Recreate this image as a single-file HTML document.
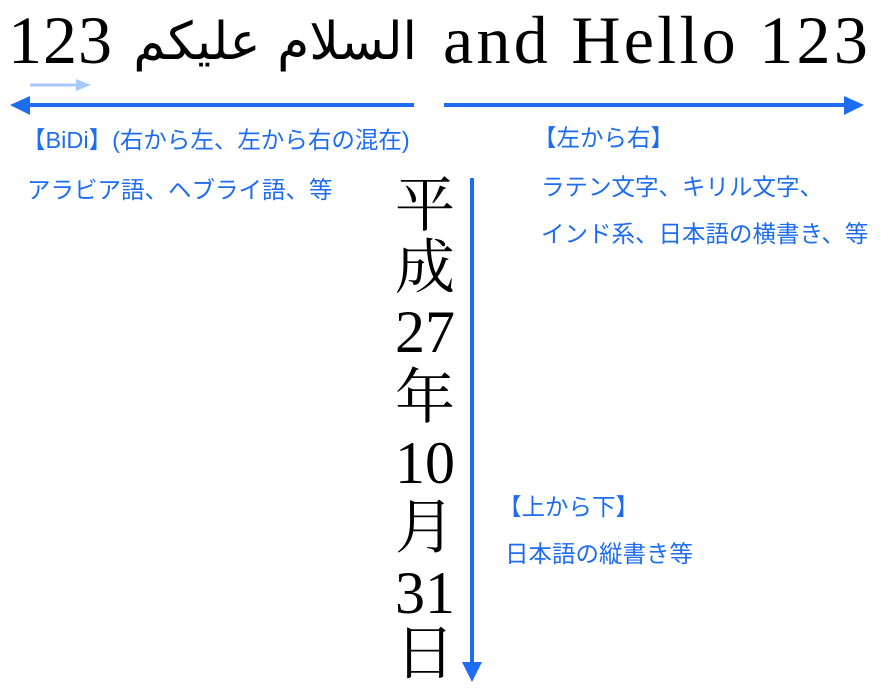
<!DOCTYPE html>
<html><head><meta charset="utf-8"><style>
body{margin:0;width:896px;height:698px;background:#fff;position:relative;overflow:hidden}
.s{position:absolute;font-family:"Liberation Serif","Noto Serif CJK SC",serif;color:#000;white-space:nowrap;line-height:1}
.b{position:absolute;font-family:"Liberation Sans","Noto Sans CJK JP",sans-serif;color:#1e6cf0;font-size:23.5px;white-space:nowrap;line-height:1}
.v{position:absolute;left:390px;width:70px;text-align:center;font-family:"Liberation Serif","Noto Serif CJK JP",serif;font-size:60px;line-height:1}
</style></head><body>
<div class="s" style="left:8px;top:6px;font-size:68px;letter-spacing:1px">123</div>
<div class="s" style="left:135px;top:16px;width:282px;font-size:52px;font-family:'DejaVu Sans',serif;text-align:center" dir="rtl">السلام عليكم</div>
<div class="s" style="left:443px;top:6px;font-size:68px;letter-spacing:3.3px">and Hello 123</div>
<svg style="position:absolute;left:0;top:0" width="896" height="698">
<line x1="30" y1="85" x2="78" y2="85" stroke="#a9c8fb" stroke-width="3"/><polygon points="91,85 76,79 76,91" fill="#a9c8fb"/>
<line x1="24" y1="105" x2="414" y2="105" stroke="#1e6cf0" stroke-width="4"/><polygon points="10,105 30,96 30,115" fill="#1e6cf0"/>
<line x1="444" y1="105" x2="848" y2="105" stroke="#1e6cf0" stroke-width="4"/><polygon points="864,105 844,96 844,115" fill="#1e6cf0"/>
<line x1="472" y1="178" x2="472" y2="665" stroke="#1e6cf0" stroke-width="4"/><polygon points="472,682 462,662 482,662" fill="#1e6cf0"/>
</svg>
<div class="b" style="left:22px;top:129px">【BiDi】(右から左、左から右の混在)</div>
<div class="b" style="left:27px;top:179px">アラビア語、ヘブライ語、等</div>
<div class="b" style="left:533px;top:127px">【左から右】</div>
<div class="b" style="left:541px;top:176px">ラテン文字、キリル文字、</div>
<div class="b" style="left:541px;top:223px">インド系、日本語の横書き、等</div>
<div class="b" style="left:498px;top:496px">【上から下】</div>
<div class="b" style="left:505px;top:543px">日本語の縦書き等</div>
<div class="v" style="top:176px">平</div>
<div class="v" style="top:238px">成</div>
<div class="v" style="top:302px">27</div>
<div class="v" style="top:368px">年</div>
<div class="v" style="top:433px">10</div>
<div class="v" style="top:498px">月</div>
<div class="v" style="top:563px">31</div>
<div class="v" style="top:624px">日</div>
</body></html>
